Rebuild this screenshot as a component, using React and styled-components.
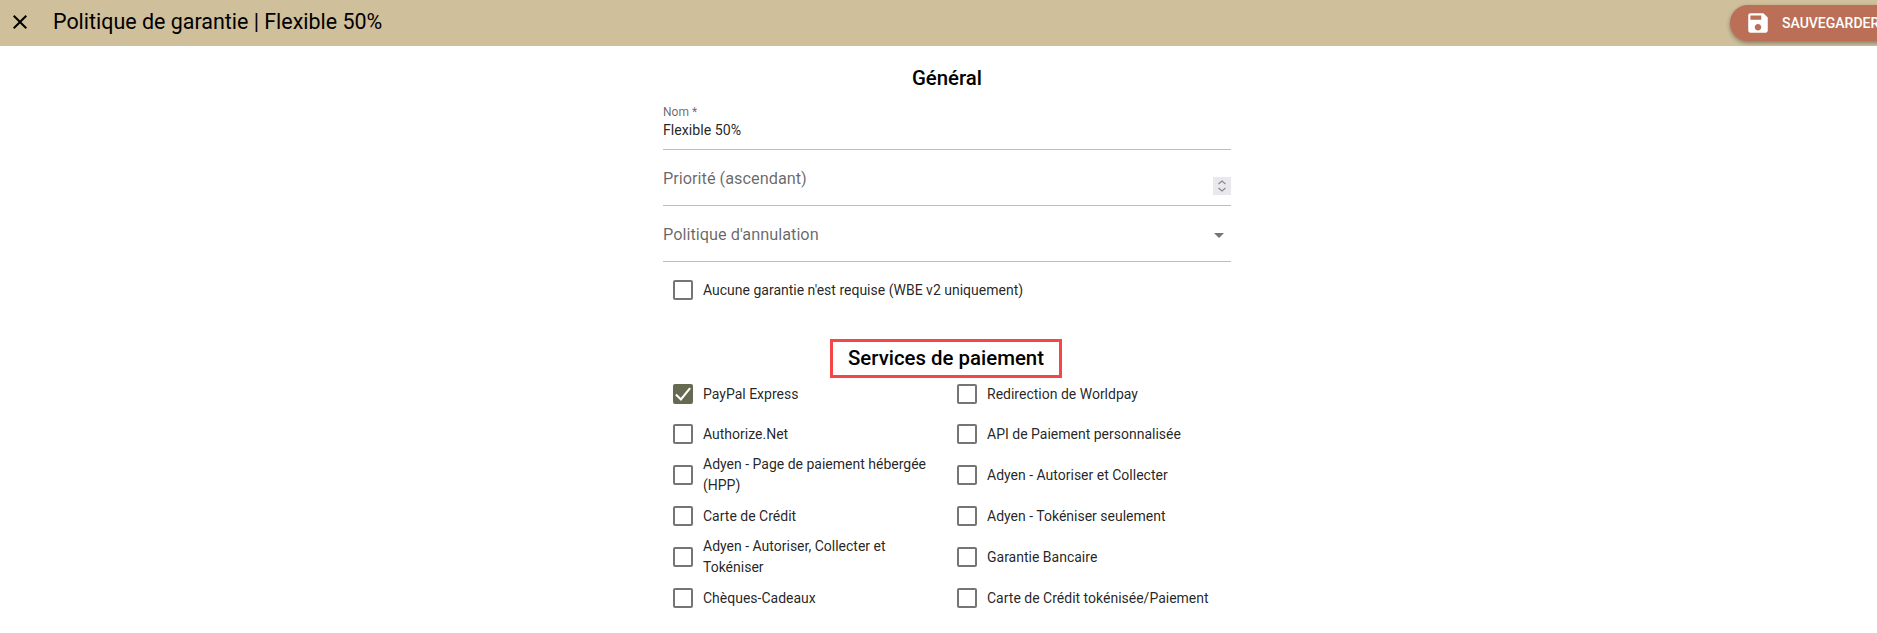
import React from "react"
import styled, { createGlobalStyle } from "styled-components"

const GlobalStyle = createGlobalStyle`
  html, body {
    margin: 0;
    height: 100%;
    overflow: hidden;
    background: #fff;
    font-family: Roboto, "Liberation Sans", sans-serif;
    color: rgba(0, 0, 0, 0.87);
  }
`

const Toolbar = styled.header`
  height: 46px;
  background: #cfbf9b;
  display: flex;
  align-items: center;
  overflow: hidden;
  padding-left: 8px;
`

const CloseButton = styled.button`
  width: 24px;
  height: 24px;
  padding: 0;
  margin: 0 21px 3px 0;
  border: 0;
  background: none;
  display: flex;
  color: #000;
`

const Title = styled.h1`
  margin: 0 0 3px;
  flex: 1;
  font-size: 21.44px;
  font-weight: 400;
  color: #000;
  white-space: nowrap;
`

const SaveButton = styled.button`
  flex-shrink: 0;
  width: 180px;
  height: 36px;
  margin-right: -33px;
  padding: 0 0 0 15px;
  border: 0;
  border-radius: 18px;
  background: #bb6f56;
  color: #fff;
  display: flex;
  align-items: center;
  gap: 11px;
  font: 500 14px Roboto, sans-serif;
  white-space: nowrap;
  box-shadow: 0 2px 4px rgba(0, 0, 0, 0.35);
`

const Content = styled.div`
  padding-left: 17px;
`

const Form = styled.main`
  width: 568px;
  margin: 0 auto;
`

const SectionTitle = styled.h2`
  margin: 0;
  font-size: 20.4px;
  font-weight: 500;
  line-height: 24px;
  text-align: center;
  color: #000;
`

const GeneralTitle = styled(SectionTitle)`
  padding-top: 20px;
`

const Field = styled.div`
  height: ${(p) => p.$height}px;
  padding-top: 2px;
  border-bottom: 1px solid #bdbdbd;
  display: flex;
  box-sizing: border-box;
  align-items: center;
  justify-content: space-between;
`

const NameField = styled(Field)`
  flex-direction: column;
  align-items: flex-start;
  justify-content: flex-start;
  padding-top: 15px;
`

const SmallLabel = styled.label`
  font-size: 12px;
  line-height: 14px;
  color: rgba(0, 0, 0, 0.6);
`

const Value = styled.div`
  font-size: 14.2px;
  line-height: 22px;
  color: rgba(0, 0, 0, 0.87);
`

const Placeholder = styled.span`
  font-size: 16.32px;
  color: rgba(0, 0, 0, 0.6);
`

const Spinner = styled.span`
  width: 18px;
  height: 18px;
  margin-top: 15px;
  background: #e9e9ed;
  display: flex;
`

const Row = styled.label`
  display: flex;
  align-items: center;
  gap: 10px;
  padding-left: 10px;
  min-height: 40px;
  font-size: 14px;
  line-height: 21px;
  color: rgba(0, 0, 0, 0.87);
`

const Box = styled.span`
  flex-shrink: 0;
  width: 20px;
  height: 20px;
  box-sizing: border-box;
  border: 2px solid ${(p) => (p.$checked ? "#656a50" : "#757575")};
  border-radius: 2px;
  background: ${(p) => (p.$checked ? "#656a50" : "transparent")};
  display: flex;
  align-items: center;
  justify-content: center;
`

const CheckMark = styled.svg`
  flex-shrink: 0;
`

const SingleRow = styled(Row)`
  margin-top: 8px;
`

const ServicesTitle = styled(SectionTitle)`
  width: 232px;
  height: 39px;
  margin: 29px 0 0 167px;
  box-sizing: border-box;
  border: 3px solid #f44848;
  line-height: 33px;
`

const ServiceGrid = styled.div`
  display: grid;
  grid-template-columns: 284px 284px;
  align-items: center;
  margin-top: -4px;
`

const services = [
  ["PayPal Express", true],
  ["Redirection de Worldpay"],
  ["Authorize.Net"],
  ["API de Paiement personnalisée"],
  ["Adyen - Page de paiement hébergée (HPP)"],
  ["Adyen - Autoriser et Collecter"],
  ["Carte de Crédit"],
  ["Adyen - Tokéniser seulement"],
  ["Adyen - Autoriser, Collecter et Tokéniser"],
  ["Garantie Bancaire"],
  ["Chèques-Cadeaux"],
  ["Carte de Crédit tokénisée/Paiement"],
]

function Check({ label, checked }) {
  return (
    <Row>
      <Box $checked={checked}>
        {checked && (
          <CheckMark width="20" height="20" viewBox="0 0 24 24" fill="none" stroke="#fff" strokeWidth="2.6">
            <path d="M3.5 12.5l6 6L20.5 5" />
          </CheckMark>
        )}
      </Box>
      <span>{label}</span>
    </Row>
  )
}

export default function App() {
  return (
    <>
      <GlobalStyle />
      <Toolbar>
        <CloseButton aria-label="Fermer">
          <svg width="24" height="24" viewBox="0 0 24 24" fill="currentColor">
            <path d="M19 6.41L17.59 5 12 10.59 6.41 5 5 6.41 10.59 12 5 17.59 6.41 19 12 13.41 17.59 19 19 17.59 13.41 12z" />
          </svg>
        </CloseButton>
        <Title>Politique de garantie | Flexible 50%</Title>
        <SaveButton>
          <svg width="26" height="26" viewBox="0 0 24 24" fill="currentColor">
            <path d="M17 3H5c-1.11 0-2 .9-2 2v14c0 1.1.89 2 2 2h14c1.1 0 2-.9 2-2V7l-4-4zm-5 16c-1.66 0-3-1.34-3-3s1.34-3 3-3 3 1.34 3 3-1.34 3-3 3zm3-10H5V5h10v4z" />
          </svg>
          SAUVEGARDER
        </SaveButton>
      </Toolbar>
      <Content>
        <Form>
          <GeneralTitle>Général</GeneralTitle>
          <NameField $height={60}>
            <SmallLabel>Nom *</SmallLabel>
            <Value>Flexible 50%</Value>
          </NameField>
          <Field $height={56}>
            <Placeholder>Priorité (ascendant)</Placeholder>
            <Spinner>
              <svg width="18" height="18" viewBox="0 0 18 18" fill="none" stroke="#8a8a8a" strokeWidth="1.2">
                <path d="M5.5 7l3.5-3 3.5 3M5.5 11l3.5 3 3.5-3" />
              </svg>
            </Spinner>
          </Field>
          <Field $height={56}>
            <Placeholder>Politique d'annulation</Placeholder>
            <svg width="24" height="24" viewBox="0 0 24 24" fill="#757575">
              <path d="M7 10l5 5 5-5z" />
            </svg>
          </Field>
          <SingleRow>
            <Box />
            <span>Aucune garantie n'est requise (WBE v2 uniquement)</span>
          </SingleRow>
          <ServicesTitle>Services de paiement</ServicesTitle>
          <ServiceGrid>
            {services.map(([label, checked]) => (
              <Check key={label} label={label} checked={checked} />
            ))}
          </ServiceGrid>
        </Form>
      </Content>
    </>
  )
}
